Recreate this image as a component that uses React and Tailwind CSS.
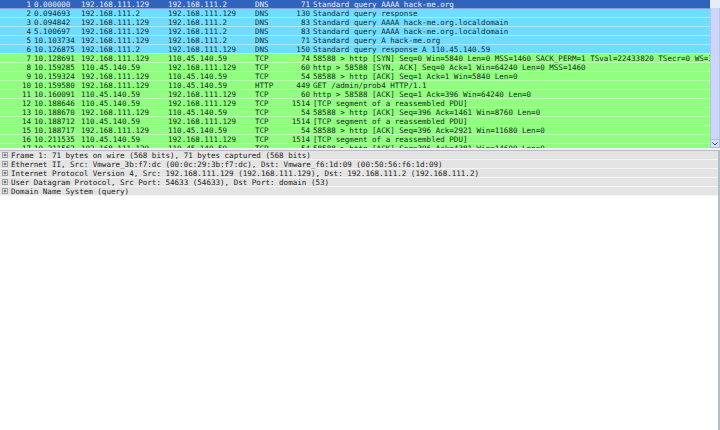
const rows = [
  ["1", "0.000000", "192.168.111.129", "192.168.111.2", "DNS", "71", "Standard query AAAA hack-me.org", "sel"],
  ["2", "0.094693", "192.168.111.2", "192.168.111.129", "DNS", "130", "Standard query response", "dns"],
  ["3", "0.094842", "192.168.111.129", "192.168.111.2", "DNS", "83", "Standard query AAAA hack-me.org.localdomain", "dns"],
  ["4", "5.100697", "192.168.111.129", "192.168.111.2", "DNS", "83", "Standard query AAAA hack-me.org.localdomain", "dns"],
  ["5", "10.103734", "192.168.111.129", "192.168.111.2", "DNS", "71", "Standard query A hack-me.org", "dns"],
  ["6", "10.126875", "192.168.111.2", "192.168.111.129", "DNS", "150", "Standard query response A 110.45.140.59", "dns"],
  ["7", "10.128691", "192.168.111.129", "110.45.140.59", "TCP", "74", "58588 > http [SYN] Seq=0 Win=5840 Len=0 MSS=1460 SACK_PERM=1 TSval=22433820 TSecr=0 WS=3", "tcp"],
  ["8", "10.159285", "110.45.140.59", "192.168.111.129", "TCP", "60", "http > 58588 [SYN, ACK] Seq=0 Ack=1 Win=64240 Len=0 MSS=1460", "tcp"],
  ["9", "10.159324", "192.168.111.129", "110.45.140.59", "TCP", "54", "58588 > http [ACK] Seq=1 Ack=1 Win=5840 Len=0", "tcp"],
  ["10", "10.159580", "192.168.111.129", "110.45.140.59", "HTTP", "449", "GET /admin/prob4 HTTP/1.1", "tcp"],
  ["11", "10.160091", "110.45.140.59", "192.168.111.129", "TCP", "60", "http > 58588 [ACK] Seq=1 Ack=396 Win=64240 Len=0", "tcp"],
  ["12", "10.188646", "110.45.140.59", "192.168.111.129", "TCP", "1514", "[TCP segment of a reassembled PDU]", "tcp"],
  ["13", "10.188670", "192.168.111.129", "110.45.140.59", "TCP", "54", "58588 > http [ACK] Seq=396 Ack=1461 Win=8760 Len=0", "tcp"],
  ["14", "10.188712", "110.45.140.59", "192.168.111.129", "TCP", "1514", "[TCP segment of a reassembled PDU]", "tcp"],
  ["15", "10.188717", "192.168.111.129", "110.45.140.59", "TCP", "54", "58588 > http [ACK] Seq=396 Ack=2921 Win=11680 Len=0", "tcp"],
  ["16", "10.211535", "110.45.140.59", "192.168.111.129", "TCP", "1514", "[TCP segment of a reassembled PDU]", "tcp"],
  ["17", "10.211562", "192.168.111.129", "110.45.140.59", "TCP", "54", "58588 > http [ACK] Seq=396 Ack=4381 Win=14600 Len=0", "tcp"],
];

const details = [
  "Frame 1: 71 bytes on wire (568 bits), 71 bytes captured (568 bits)",
  "Ethernet II, Src: Vmware_3b:f7:dc (00:0c:29:3b:f7:dc), Dst: Vmware_f6:1d:09 (00:50:56:f6:1d:09)",
  "Internet Protocol Version 4, Src: 192.168.111.129 (192.168.111.129), Dst: 192.168.111.2 (192.168.111.2)",
  "User Datagram Protocol, Src Port: 54633 (54633), Dst Port: domain (53)",
  "Domain Name System (query)",
];

const rowColors = {
  sel: "bg-[#3064bc] text-[#e8eefa]",
  dns: "bg-[#70dcff] text-[#12303a]",
  tcp: "bg-[#90ff80] text-[#12301a]",
};

function PacketRow({ row }) {
  const [no, time, src, dst, proto, len, info, kind] = row;
  return (
    <div className={`flex h-[9px] shrink-0 items-center whitespace-nowrap border-b border-white/40 ${rowColors[kind]}`}>
      <span className="w-[31px] shrink-0 text-right">{no}</span>
      <span className="ml-[3px] w-[47px] shrink-0">{time}</span>
      <span className="w-[87px] shrink-0">{src}</span>
      <span className="w-[87px] shrink-0">{dst}</span>
      <span className="w-[30px] shrink-0">{proto}</span>
      <span className="w-[25px] shrink-0 text-right">{len}</span>
      <span className="relative ml-[3px] min-w-0">{info}</span>
    </div>
  );
}

function Expander() {
  return (
    <svg width="6" height="6" viewBox="0 0 6 6" className="ml-[2px] mr-[3px] shrink-0">
      <rect x="0.5" y="0.5" width="5" height="5" fill="#f4f4f4" stroke="#9aa0a8" />
      <path d="M1.5 3H4.5M3 1.5V4.5" stroke="#50545a" />
    </svg>
  );
}

export default function App() {
  return (
    <div className="flex h-[430px] w-[720px] flex-col overflow-hidden bg-white font-['DejaVu_Sans_Mono',monospace] text-[7.56px] leading-[9px]">
      <div className="flex h-[148px] shrink-0">
        <div className="flex min-w-0 flex-1 flex-col overflow-hidden">
          {rows.map((row) => (
            <PacketRow key={row[0]} row={row} />
          ))}
        </div>
        <div className="flex w-[10px] shrink-0 flex-col bg-[#eef0f8]">
          <div className="h-[8px] shrink-0 bg-[#e8ecfa]" />
          <div className="flex-1 border-x border-[#b8c4ee] bg-[#ccd6f8]" />
          <div className="flex h-[9px] shrink-0 items-center justify-center border border-[#b0bce8] bg-[#d4def8]">
            <svg width="6" height="4" viewBox="0 0 6 4">
              <path d="M0.5 0.5L3 3L5.5 0.5" fill="none" stroke="#3a4f90" />
            </svg>
          </div>
        </div>
      </div>
      <div className="h-[2px] shrink-0 bg-[#f0f0f0]" />
      <div className="min-h-0 flex-1 border-r-2 border-t border-[#b8bcc4] text-[#1c1c1c]">
        {details.map((line) => (
          <div key={line} className="flex h-[9px] items-center whitespace-nowrap border-b border-[#f4f4f4] bg-[#e4e4e4]">
            <Expander />
            <span className="relative">{line}</span>
          </div>
        ))}
      </div>
    </div>
  );
}
